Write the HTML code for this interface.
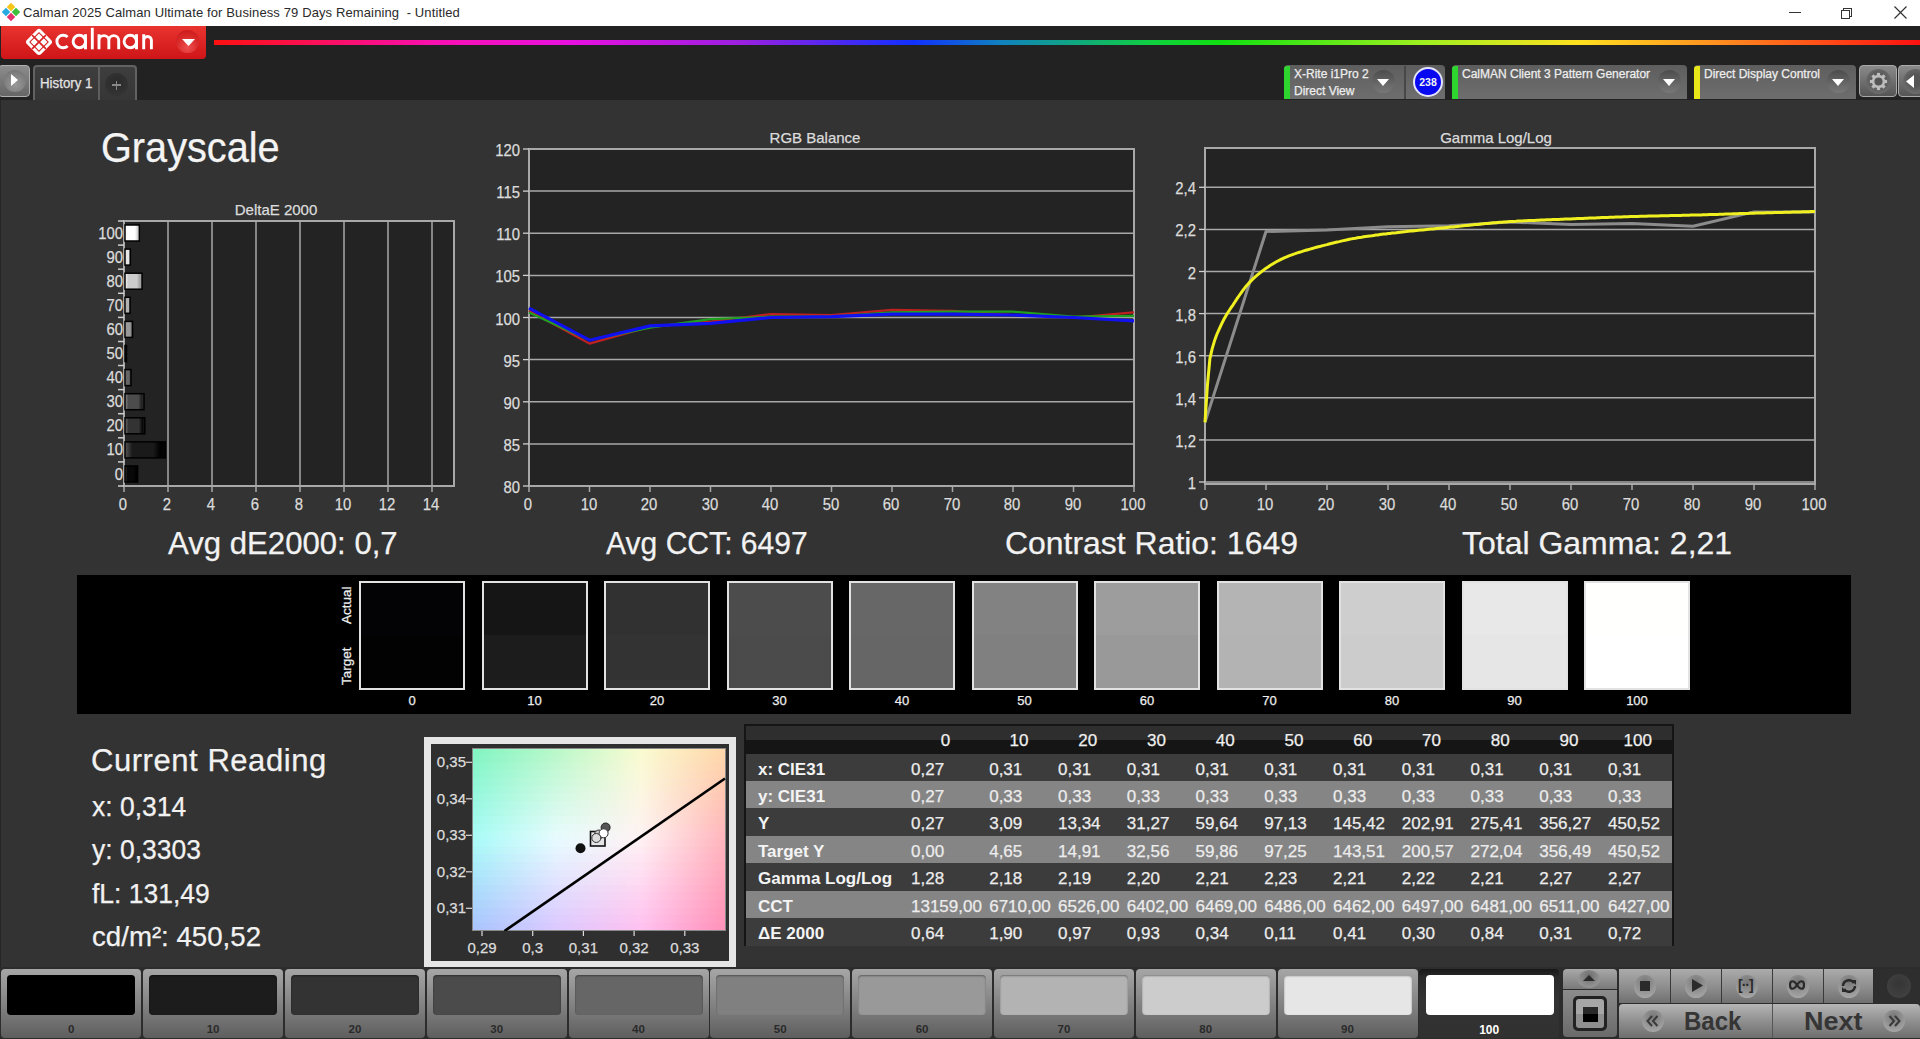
<!DOCTYPE html>
<html><head><meta charset="utf-8"><title>Calman</title>
<style>
*{margin:0;padding:0;box-sizing:border-box}
html,body{width:1920px;height:1039px;overflow:hidden;background:#333333;font-family:"Liberation Sans",sans-serif;color:#eee}
.a{position:absolute}
.t{position:absolute;white-space:nowrap;line-height:1;-webkit-text-stroke:0.25px currentColor}
</style></head><body>

<div class="a" style="left:0;top:0;width:1920px;height:26px;background:#fff"></div>
<div class="t" style="left:23px;top:6px;font-size:13px;color:#2a2a2a;letter-spacing:0.12px;-webkit-text-stroke:0">Calman 2025 Calman Ultimate for Business 79 Days Remaining&nbsp;&nbsp;- Untitled</div>
<svg class="a" style="left:1px;top:3px" width="20" height="20" viewBox="0 0 20 20">
<rect x="7" y="1" width="6" height="6" transform="rotate(45 10 4)" fill="#f5c518"/>
<rect x="2" y="6" width="6" height="6" transform="rotate(45 5 9)" fill="#27a9e1"/>
<rect x="12" y="6" width="6" height="6" transform="rotate(45 15 9)" fill="#3cc13c"/>
<rect x="7" y="11" width="6" height="6" transform="rotate(45 10 14)" fill="#e5336c"/>
</svg>
<div class="a" style="left:1789px;top:12px;width:12px;height:1px;background:#333"></div>
<div class="a" style="left:1843px;top:8px;width:9px;height:9px;border:1px solid #333"></div>
<div class="a" style="left:1841px;top:10px;width:9px;height:9px;border:1px solid #333;background:#fff"></div>
<svg class="a" style="left:1894px;top:6px" width="13" height="13"><path d="M0.5 0.5 L12.5 12.5 M12.5 0.5 L0.5 12.5" stroke="#333" stroke-width="1.2"/></svg>
<div class="a" style="left:0;top:26px;width:1920px;height:74px;background:#222222"></div>
<div class="a" style="left:1px;top:26px;width:205px;height:33px;border-radius:0 0 4px 4px;background:linear-gradient(#e8342f,#cf1518)"></div>
<svg class="a" style="left:0;top:26px" width="206" height="33" viewBox="0 26 206 33"><g fill="none" stroke="#fff" stroke-width="2.9">
<path d="M67.6 37.0 A6.3 6.3 0 1 0 67.6 46.0"/>
<circle cx="79.3" cy="41.5" r="6.2"/><path d="M85.5 34.2 L85.5 49.3"/>
<path d="M92.3 27.8 L92.3 49.3"/>
<path d="M99 49.3 L99 34.2 M99 40.3 A4.93 4.93 0 0 1 108.85 40.3 L108.85 49.3 M108.85 40.3 A4.93 4.93 0 0 1 118.7 40.3 L118.7 49.3"/>
<circle cx="130.3" cy="41.5" r="6.2"/><path d="M136.5 34.2 L136.5 49.3"/>
<path d="M143.7 49.3 L143.7 34.2 M143.7 40.3 A3.85 3.85 0 0 1 151.4 40.3 L151.4 49.3"/>
</g></svg>
<div class="a" style="left:176px;top:30px;width:23px;height:23px;border-radius:50%;background:radial-gradient(circle at 50% 75%,#ee5050,#d82828 55%,#c41414)"></div>
<svg class="a" style="left:181.5px;top:39px" width="13" height="8"><path d="M0 0 L13 0 L6.5 7 Z" fill="#fff"/></svg>
<svg class="a" style="left:24px;top:28px" width="30" height="28" viewBox="-15 -14 30 28">
<path d="M0 -13.2 Q1 -13.2 2 -12.2 L12.6 -1.6 Q13.6 0 12.6 1.6 L2 12.2 Q0 13.8 -2 12.2 L-12.6 1.6 Q-13.6 0 -12.6 -1.6 L-2 -12.2 Q-1 -13.2 0 -13.2 Z" fill="#fff"/>
<path d="M0 -9.9 L9.9 0 L0 9.9 L-9.9 0 Z" fill="#d82020"/>
<path d="M0 -8.4 L8.4 0 L0 8.4 L-8.4 0 Z" fill="#fff"/>
<path d="M-6.9 -6.9 L6.9 6.9 M6.9 -6.9 L-6.9 6.9" stroke="#d82020" stroke-width="1.6"/>
</svg>
<div class="a" style="left:214px;top:40px;width:1706px;height:5px;background:linear-gradient(90deg,#ff1010 0%,#f810b0 13%,#e810e0 21%,#9a20e0 31%,#1030ff 41%,#1080c0 46%,#10d040 55%,#10e010 59%,#a0f020 71%,#ffe020 80%,#ff9020 88%,#ff1010 100%)"></div>
<div class="a" style="left:-2px;top:65px;width:32px;height:32px;border-radius:4px;background:linear-gradient(#8c8c8c,#666);border:1.5px solid #b0b0b0"></div>
<div class="a" style="left:4px;top:70px;width:22px;height:22px;border-radius:50%;background:radial-gradient(circle at 50% 65%,#9a9a9a,#7a7a7a 70%,#6a6a6a)"></div>
<svg class="a" style="left:11px;top:74px" width="7" height="12"><path d="M0 0 L7 6 L0 12 Z" fill="#fff"/></svg>
<div class="a" style="left:33px;top:65px;width:104px;height:35px;border-radius:4px 4px 0 0;background:linear-gradient(#3e3e3e,#363636);border:2px solid #626262;border-bottom:none"></div>
<div class="a" style="left:98px;top:66px;width:2px;height:34px;background:#5e5e5e"></div>
<div class="t" style="left:40px;top:76px;font-size:14px;color:#e4e4e4;transform:scaleX(0.95);transform-origin:0 0">History 1</div>
<div class="a" style="left:105px;top:73px;width:23px;height:23px;border-radius:50%;background:radial-gradient(circle at 50% 40%,#2a2a2a,#333 70%,#3a3a3a)"></div>
<div class="a" style="left:112px;top:84px;width:9px;height:1.5px;background:#888"></div>
<div class="a" style="left:115.75px;top:80.5px;width:1.5px;height:9px;background:#888"></div>
<div class="a" style="left:0;top:100px;width:1px;height:868px;background:#262626"></div>
<div class="a" style="left:1284px;top:65px;width:161px;height:34px;border-radius:4px 4px 0 0;background:linear-gradient(#5e5e5e,#6e6e6e)"></div>
<div class="a" style="left:1284px;top:66px;width:6px;height:33px;border-radius:3px 0 0 0;background:#2fd52f"></div>
<div class="t" style="left:1294px;top:68px;font-size:12px;color:#eee">X-Rite i1Pro 2</div>
<div class="t" style="left:1294px;top:85px;font-size:12px;color:#eee">Direct View</div>
<div class="a" style="left:1404px;top:66px;width:2px;height:33px;background:#474747"></div>
<div class="a" style="left:1413px;top:67px;width:30px;height:30px;border-radius:50%;background:#0808f0;border:2px solid #e4e4ff"></div>
<div class="t" style="left:1413px;top:77px;width:30px;text-align:center;font-size:10.5px;font-weight:bold;-webkit-text-stroke:0;color:#f4f4f4">238</div>
<div class="a" style="left:1452px;top:65px;width:235px;height:34px;border-radius:4px 4px 0 0;background:linear-gradient(#5e5e5e,#6e6e6e)"></div>
<div class="a" style="left:1452px;top:66px;width:6px;height:33px;border-radius:3px 0 0 0;background:#2fd52f"></div>
<div class="t" style="left:1462px;top:68px;font-size:12px;color:#eee">CalMAN Client 3 Pattern Generator</div>
<div class="a" style="left:1694px;top:65px;width:162px;height:34px;border-radius:4px 4px 0 0;background:linear-gradient(#5e5e5e,#6e6e6e)"></div>
<div class="a" style="left:1694px;top:66px;width:6px;height:33px;border-radius:3px 0 0 0;background:#e8e818"></div>
<div class="t" style="left:1704px;top:68px;font-size:12px;color:#eee">Direct Display Control</div>
<div class="a" style="left:1372px;top:70px;width:23px;height:23px;border-radius:50%;background:linear-gradient(#4c4c4c,#6c6c6c 70%,#777)"></div>
<svg class="a" style="left:1377px;top:79px" width="12" height="7"><path d="M0 0 L12 0 L6 7 Z" fill="#fff"/></svg>
<div class="a" style="left:1658px;top:70px;width:23px;height:23px;border-radius:50%;background:linear-gradient(#4c4c4c,#6c6c6c 70%,#777)"></div>
<svg class="a" style="left:1663px;top:79px" width="12" height="7"><path d="M0 0 L12 0 L6 7 Z" fill="#fff"/></svg>
<div class="a" style="left:1827px;top:70px;width:23px;height:23px;border-radius:50%;background:linear-gradient(#4c4c4c,#6c6c6c 70%,#777)"></div>
<svg class="a" style="left:1832px;top:79px" width="12" height="7"><path d="M0 0 L12 0 L6 7 Z" fill="#fff"/></svg>
<div class="a" style="left:1859px;top:65px;width:38px;height:32px;border-radius:4px;background:linear-gradient(#8a8a8a,#555);border:1px solid #aaa"></div>
<div class="a" style="left:1866px;top:69px;width:25px;height:25px;border-radius:50%;background:radial-gradient(circle at 50% 45%,#555 30%,#6e6e6e 75%,#888)"></div>
<svg class="a" style="left:1866px;top:69px" width="25" height="25" viewBox="-12.5 -12.5 25 25"><circle r="5.4" fill="none" stroke="#bdbdbd" stroke-width="2.6"/><rect x="-1.6" y="-8.6" width="3.2" height="4" transform="rotate(0)" fill="#bdbdbd"/><rect x="-1.6" y="-8.6" width="3.2" height="4" transform="rotate(45)" fill="#bdbdbd"/><rect x="-1.6" y="-8.6" width="3.2" height="4" transform="rotate(90)" fill="#bdbdbd"/><rect x="-1.6" y="-8.6" width="3.2" height="4" transform="rotate(135)" fill="#bdbdbd"/><rect x="-1.6" y="-8.6" width="3.2" height="4" transform="rotate(180)" fill="#bdbdbd"/><rect x="-1.6" y="-8.6" width="3.2" height="4" transform="rotate(225)" fill="#bdbdbd"/><rect x="-1.6" y="-8.6" width="3.2" height="4" transform="rotate(270)" fill="#bdbdbd"/><rect x="-1.6" y="-8.6" width="3.2" height="4" transform="rotate(315)" fill="#bdbdbd"/></svg>
<div class="a" style="left:1898px;top:65px;width:30px;height:32px;border-radius:4px;background:linear-gradient(#8a8a8a,#555);border:1px solid #aaa"></div>
<div class="a" style="left:1903px;top:69px;width:25px;height:25px;border-radius:50%;background:radial-gradient(circle at 50% 45%,#555 30%,#6e6e6e 75%,#888)"></div>
<svg class="a" style="left:1906px;top:75px" width="8" height="13"><path d="M8 0 L0 6.5 L8 13 Z" fill="#fff"/></svg>
<div class="t" style="left:101px;top:127px;font-size:42px;color:#f4f4f4;transform:scaleX(0.945);transform-origin:0 0">Grayscale</div>
<div class="t" style="left:176px;top:202px;width:200px;text-align:center;font-size:15px;color:#dcdcdc">DeltaE 2000</div>
<svg class="a" style="left:0;top:0" width="1920" height="1039">
<rect x="124" y="221" width="330" height="265" fill="#232323"/>
<line x1="168.0" y1="221" x2="168.0" y2="486" stroke="#a8a8a8" stroke-width="1.5"/>
<line x1="212.0" y1="221" x2="212.0" y2="486" stroke="#a8a8a8" stroke-width="1.5"/>
<line x1="256.0" y1="221" x2="256.0" y2="486" stroke="#a8a8a8" stroke-width="1.5"/>
<line x1="300.0" y1="221" x2="300.0" y2="486" stroke="#a8a8a8" stroke-width="1.5"/>
<line x1="344.0" y1="221" x2="344.0" y2="486" stroke="#a8a8a8" stroke-width="1.5"/>
<line x1="388.0" y1="221" x2="388.0" y2="486" stroke="#a8a8a8" stroke-width="1.5"/>
<line x1="432.0" y1="221" x2="432.0" y2="486" stroke="#a8a8a8" stroke-width="1.5"/>
<rect x="124" y="221" width="330" height="265" fill="none" stroke="#a8a8a8" stroke-width="2"/>
<line x1="124.0" y1="486" x2="124.0" y2="492" stroke="#a8a8a8" stroke-width="1.5"/>
<line x1="168.0" y1="486" x2="168.0" y2="492" stroke="#a8a8a8" stroke-width="1.5"/>
<line x1="212.0" y1="486" x2="212.0" y2="492" stroke="#a8a8a8" stroke-width="1.5"/>
<line x1="256.0" y1="486" x2="256.0" y2="492" stroke="#a8a8a8" stroke-width="1.5"/>
<line x1="300.0" y1="486" x2="300.0" y2="492" stroke="#a8a8a8" stroke-width="1.5"/>
<line x1="344.0" y1="486" x2="344.0" y2="492" stroke="#a8a8a8" stroke-width="1.5"/>
<line x1="388.0" y1="486" x2="388.0" y2="492" stroke="#a8a8a8" stroke-width="1.5"/>
<line x1="432.0" y1="486" x2="432.0" y2="492" stroke="#a8a8a8" stroke-width="1.5"/>
<line x1="118" y1="221.0" x2="124" y2="221.0" stroke="#cfcfcf" stroke-width="1.5"/>
<line x1="118" y1="245.1" x2="124" y2="245.1" stroke="#cfcfcf" stroke-width="1.5"/>
<line x1="118" y1="269.2" x2="124" y2="269.2" stroke="#cfcfcf" stroke-width="1.5"/>
<line x1="118" y1="293.3" x2="124" y2="293.3" stroke="#cfcfcf" stroke-width="1.5"/>
<line x1="118" y1="317.4" x2="124" y2="317.4" stroke="#cfcfcf" stroke-width="1.5"/>
<line x1="118" y1="341.5" x2="124" y2="341.5" stroke="#cfcfcf" stroke-width="1.5"/>
<line x1="118" y1="365.5" x2="124" y2="365.5" stroke="#cfcfcf" stroke-width="1.5"/>
<line x1="118" y1="389.6" x2="124" y2="389.6" stroke="#cfcfcf" stroke-width="1.5"/>
<line x1="118" y1="413.7" x2="124" y2="413.7" stroke="#cfcfcf" stroke-width="1.5"/>
<line x1="118" y1="437.8" x2="124" y2="437.8" stroke="#cfcfcf" stroke-width="1.5"/>
<line x1="118" y1="461.9" x2="124" y2="461.9" stroke="#cfcfcf" stroke-width="1.5"/>
<line x1="118" y1="486.0" x2="124" y2="486.0" stroke="#cfcfcf" stroke-width="1.5"/>
<defs>
<linearGradient id="bg0" x1="0" x2="1" y1="0" y2="0"><stop offset="0" stop-color="rgb(68,68,68)"/><stop offset="0.18" stop-color="rgb(8,8,8)"/><stop offset="0.7" stop-color="rgb(8,8,8)"/><stop offset="0.88" stop-color="rgb(0,0,0)"/><stop offset="1" stop-color="rgb(0,0,0)"/></linearGradient>
<linearGradient id="bg1" x1="0" x2="1" y1="0" y2="0"><stop offset="0" stop-color="rgb(86,86,86)"/><stop offset="0.18" stop-color="rgb(26,26,26)"/><stop offset="0.7" stop-color="rgb(26,26,26)"/><stop offset="0.88" stop-color="rgb(0,0,0)"/><stop offset="1" stop-color="rgb(6,6,6)"/></linearGradient>
<linearGradient id="bg2" x1="0" x2="1" y1="0" y2="0"><stop offset="0" stop-color="rgb(111,111,111)"/><stop offset="0.18" stop-color="rgb(51,51,51)"/><stop offset="0.7" stop-color="rgb(51,51,51)"/><stop offset="0.88" stop-color="rgb(6,6,6)"/><stop offset="1" stop-color="rgb(31,31,31)"/></linearGradient>
<linearGradient id="bg3" x1="0" x2="1" y1="0" y2="0"><stop offset="0" stop-color="rgb(136,136,136)"/><stop offset="0.18" stop-color="rgb(76,76,76)"/><stop offset="0.7" stop-color="rgb(76,76,76)"/><stop offset="0.88" stop-color="rgb(31,31,31)"/><stop offset="1" stop-color="rgb(56,56,56)"/></linearGradient>
<linearGradient id="bg4" x1="0" x2="1" y1="0" y2="0"><stop offset="0" stop-color="rgb(162,162,162)"/><stop offset="0.18" stop-color="rgb(102,102,102)"/><stop offset="0.7" stop-color="rgb(102,102,102)"/><stop offset="0.88" stop-color="rgb(57,57,57)"/><stop offset="1" stop-color="rgb(82,82,82)"/></linearGradient>
<linearGradient id="bg5" x1="0" x2="1" y1="0" y2="0"><stop offset="0" stop-color="rgb(188,188,188)"/><stop offset="0.18" stop-color="rgb(128,128,128)"/><stop offset="0.7" stop-color="rgb(128,128,128)"/><stop offset="0.88" stop-color="rgb(83,83,83)"/><stop offset="1" stop-color="rgb(108,108,108)"/></linearGradient>
<linearGradient id="bg6" x1="0" x2="1" y1="0" y2="0"><stop offset="0" stop-color="rgb(213,213,213)"/><stop offset="0.18" stop-color="rgb(153,153,153)"/><stop offset="0.7" stop-color="rgb(153,153,153)"/><stop offset="0.88" stop-color="rgb(108,108,108)"/><stop offset="1" stop-color="rgb(133,133,133)"/></linearGradient>
<linearGradient id="bg7" x1="0" x2="1" y1="0" y2="0"><stop offset="0" stop-color="rgb(238,238,238)"/><stop offset="0.18" stop-color="rgb(178,178,178)"/><stop offset="0.7" stop-color="rgb(178,178,178)"/><stop offset="0.88" stop-color="rgb(133,133,133)"/><stop offset="1" stop-color="rgb(158,158,158)"/></linearGradient>
<linearGradient id="bg8" x1="0" x2="1" y1="0" y2="0"><stop offset="0" stop-color="rgb(255,255,255)"/><stop offset="0.18" stop-color="rgb(204,204,204)"/><stop offset="0.7" stop-color="rgb(204,204,204)"/><stop offset="0.88" stop-color="rgb(159,159,159)"/><stop offset="1" stop-color="rgb(184,184,184)"/></linearGradient>
<linearGradient id="bg9" x1="0" x2="1" y1="0" y2="0"><stop offset="0" stop-color="rgb(255,255,255)"/><stop offset="0.18" stop-color="rgb(230,230,230)"/><stop offset="0.7" stop-color="rgb(230,230,230)"/><stop offset="0.88" stop-color="rgb(185,185,185)"/><stop offset="1" stop-color="rgb(210,210,210)"/></linearGradient>
<linearGradient id="bg10" x1="0" x2="1" y1="0" y2="0"><stop offset="0" stop-color="rgb(255,255,255)"/><stop offset="0.18" stop-color="rgb(255,255,255)"/><stop offset="0.7" stop-color="rgb(255,255,255)"/><stop offset="0.88" stop-color="rgb(210,210,210)"/><stop offset="1" stop-color="rgb(235,235,235)"/></linearGradient>
</defs>
<rect x="125" y="466.0" width="12.6" height="16" fill="url(#bg0)" stroke="#000" stroke-width="1.5"/>
<rect x="125" y="441.9" width="40.3" height="16" fill="url(#bg1)" stroke="#000" stroke-width="1.5"/>
<rect x="125" y="417.8" width="19.8" height="16" fill="url(#bg2)" stroke="#000" stroke-width="1.5"/>
<rect x="125" y="393.7" width="19.0" height="16" fill="url(#bg3)" stroke="#000" stroke-width="1.5"/>
<rect x="125" y="369.6" width="6.0" height="16" fill="url(#bg4)" stroke="#000" stroke-width="1.5"/>
<rect x="125" y="345.5" width="1.5" height="16" fill="url(#bg5)" stroke="#000" stroke-width="1.5"/>
<rect x="125" y="321.4" width="7.5" height="16" fill="url(#bg6)" stroke="#000" stroke-width="1.5"/>
<rect x="125" y="297.3" width="5.1" height="16" fill="url(#bg7)" stroke="#000" stroke-width="1.5"/>
<rect x="125" y="273.2" width="17.0" height="16" fill="url(#bg8)" stroke="#000" stroke-width="1.5"/>
<rect x="125" y="249.1" width="5.3" height="16" fill="url(#bg9)" stroke="#000" stroke-width="1.5"/>
<rect x="125" y="225.0" width="14.3" height="16" fill="url(#bg10)" stroke="#000" stroke-width="1.5"/>
</svg>
<div class="t" style="left:65px;top:465.5px;width:58px;text-align:right;font-size:16.5px;transform:scaleX(0.9);transform-origin:100% 50%;color:#dcdcdc">0</div>
<div class="t" style="left:65px;top:441.4px;width:58px;text-align:right;font-size:16.5px;transform:scaleX(0.9);transform-origin:100% 50%;color:#dcdcdc">10</div>
<div class="t" style="left:65px;top:417.3px;width:58px;text-align:right;font-size:16.5px;transform:scaleX(0.9);transform-origin:100% 50%;color:#dcdcdc">20</div>
<div class="t" style="left:65px;top:393.2px;width:58px;text-align:right;font-size:16.5px;transform:scaleX(0.9);transform-origin:100% 50%;color:#dcdcdc">30</div>
<div class="t" style="left:65px;top:369.1px;width:58px;text-align:right;font-size:16.5px;transform:scaleX(0.9);transform-origin:100% 50%;color:#dcdcdc">40</div>
<div class="t" style="left:65px;top:345.0px;width:58px;text-align:right;font-size:16.5px;transform:scaleX(0.9);transform-origin:100% 50%;color:#dcdcdc">50</div>
<div class="t" style="left:65px;top:320.9px;width:58px;text-align:right;font-size:16.5px;transform:scaleX(0.9);transform-origin:100% 50%;color:#dcdcdc">60</div>
<div class="t" style="left:65px;top:296.8px;width:58px;text-align:right;font-size:16.5px;transform:scaleX(0.9);transform-origin:100% 50%;color:#dcdcdc">70</div>
<div class="t" style="left:65px;top:272.7px;width:58px;text-align:right;font-size:16.5px;transform:scaleX(0.9);transform-origin:100% 50%;color:#dcdcdc">80</div>
<div class="t" style="left:65px;top:248.6px;width:58px;text-align:right;font-size:16.5px;transform:scaleX(0.9);transform-origin:100% 50%;color:#dcdcdc">90</div>
<div class="t" style="left:65px;top:224.5px;width:58px;text-align:right;font-size:16.5px;transform:scaleX(0.9);transform-origin:100% 50%;color:#dcdcdc">100</div>
<div class="t" style="left:103.0px;top:496px;width:40px;text-align:center;font-size:16.5px;transform:scaleX(0.9);color:#dcdcdc">0</div>
<div class="t" style="left:147.0px;top:496px;width:40px;text-align:center;font-size:16.5px;transform:scaleX(0.9);color:#dcdcdc">2</div>
<div class="t" style="left:191.0px;top:496px;width:40px;text-align:center;font-size:16.5px;transform:scaleX(0.9);color:#dcdcdc">4</div>
<div class="t" style="left:235.0px;top:496px;width:40px;text-align:center;font-size:16.5px;transform:scaleX(0.9);color:#dcdcdc">6</div>
<div class="t" style="left:279.0px;top:496px;width:40px;text-align:center;font-size:16.5px;transform:scaleX(0.9);color:#dcdcdc">8</div>
<div class="t" style="left:323.0px;top:496px;width:40px;text-align:center;font-size:16.5px;transform:scaleX(0.9);color:#dcdcdc">10</div>
<div class="t" style="left:367.0px;top:496px;width:40px;text-align:center;font-size:16.5px;transform:scaleX(0.9);color:#dcdcdc">12</div>
<div class="t" style="left:411.0px;top:496px;width:40px;text-align:center;font-size:16.5px;transform:scaleX(0.9);color:#dcdcdc">14</div>
<div class="t" style="left:715px;top:130px;width:200px;text-align:center;font-size:15px;color:#dcdcdc">RGB Balance</div>
<svg class="a" style="left:0;top:0" width="1920" height="1039">
<rect x="529" y="149" width="605" height="337" fill="#232323"/>
<line x1="529" y1="191.1" x2="1134" y2="191.1" stroke="#a8a8a8" stroke-width="1.5"/>
<line x1="529" y1="233.2" x2="1134" y2="233.2" stroke="#a8a8a8" stroke-width="1.5"/>
<line x1="529" y1="275.4" x2="1134" y2="275.4" stroke="#a8a8a8" stroke-width="1.5"/>
<line x1="529" y1="317.5" x2="1134" y2="317.5" stroke="#a8a8a8" stroke-width="1.5"/>
<line x1="529" y1="359.6" x2="1134" y2="359.6" stroke="#a8a8a8" stroke-width="1.5"/>
<line x1="529" y1="401.8" x2="1134" y2="401.8" stroke="#a8a8a8" stroke-width="1.5"/>
<line x1="529" y1="443.9" x2="1134" y2="443.9" stroke="#a8a8a8" stroke-width="1.5"/>
<rect x="529" y="149" width="605" height="337" fill="none" stroke="#a8a8a8" stroke-width="2"/>
<line x1="523" y1="149.0" x2="529" y2="149.0" stroke="#d0d0d0" stroke-width="1.3"/>
<line x1="523" y1="191.1" x2="529" y2="191.1" stroke="#d0d0d0" stroke-width="1.3"/>
<line x1="523" y1="233.2" x2="529" y2="233.2" stroke="#d0d0d0" stroke-width="1.3"/>
<line x1="523" y1="275.4" x2="529" y2="275.4" stroke="#d0d0d0" stroke-width="1.3"/>
<line x1="523" y1="317.5" x2="529" y2="317.5" stroke="#d0d0d0" stroke-width="1.3"/>
<line x1="523" y1="359.6" x2="529" y2="359.6" stroke="#d0d0d0" stroke-width="1.3"/>
<line x1="523" y1="401.8" x2="529" y2="401.8" stroke="#d0d0d0" stroke-width="1.3"/>
<line x1="523" y1="443.9" x2="529" y2="443.9" stroke="#d0d0d0" stroke-width="1.3"/>
<line x1="523" y1="486.0" x2="529" y2="486.0" stroke="#d0d0d0" stroke-width="1.3"/>
<line x1="529.0" y1="486" x2="529.0" y2="492" stroke="#a8a8a8" stroke-width="1.5"/>
<line x1="589.5" y1="486" x2="589.5" y2="492" stroke="#a8a8a8" stroke-width="1.5"/>
<line x1="650.0" y1="486" x2="650.0" y2="492" stroke="#a8a8a8" stroke-width="1.5"/>
<line x1="710.5" y1="486" x2="710.5" y2="492" stroke="#a8a8a8" stroke-width="1.5"/>
<line x1="771.0" y1="486" x2="771.0" y2="492" stroke="#a8a8a8" stroke-width="1.5"/>
<line x1="831.5" y1="486" x2="831.5" y2="492" stroke="#a8a8a8" stroke-width="1.5"/>
<line x1="892.0" y1="486" x2="892.0" y2="492" stroke="#a8a8a8" stroke-width="1.5"/>
<line x1="952.5" y1="486" x2="952.5" y2="492" stroke="#a8a8a8" stroke-width="1.5"/>
<line x1="1013.0" y1="486" x2="1013.0" y2="492" stroke="#a8a8a8" stroke-width="1.5"/>
<line x1="1073.5" y1="486" x2="1073.5" y2="492" stroke="#a8a8a8" stroke-width="1.5"/>
<line x1="1134.0" y1="486" x2="1134.0" y2="492" stroke="#a8a8a8" stroke-width="1.5"/>
<polyline points="529.0,310.8 589.5,343.6 650.0,326.8 710.5,321.7 771.0,314.1 831.5,315.0 892.0,309.9 952.5,310.8 1013.0,315.0 1073.5,317.5 1134.0,312.4" fill="none" stroke="#c02020" stroke-width="2.2" stroke-linejoin="round"/>
<polyline points="529.0,312.4 589.5,340.2 650.0,327.6 710.5,319.2 771.0,316.7 831.5,316.7 892.0,312.4 952.5,311.6 1013.0,311.6 1073.5,316.7 1134.0,315.8" fill="none" stroke="#20a020" stroke-width="2.2" stroke-linejoin="round"/>
<polyline points="529.0,308.2 589.5,340.2 650.0,325.9 710.5,323.4 771.0,317.5 831.5,316.7 892.0,314.1 952.5,314.1 1013.0,315.0 1073.5,317.5 1134.0,320.9" fill="none" stroke="#1010f0" stroke-width="3.2" stroke-linejoin="round"/>
</svg>
<div class="t" style="left:469px;top:142.0px;width:51px;text-align:right;font-size:16.5px;transform:scaleX(0.9);transform-origin:100% 50%;color:#dcdcdc">120</div>
<div class="t" style="left:469px;top:184.1px;width:51px;text-align:right;font-size:16.5px;transform:scaleX(0.9);transform-origin:100% 50%;color:#dcdcdc">115</div>
<div class="t" style="left:469px;top:226.2px;width:51px;text-align:right;font-size:16.5px;transform:scaleX(0.9);transform-origin:100% 50%;color:#dcdcdc">110</div>
<div class="t" style="left:469px;top:268.4px;width:51px;text-align:right;font-size:16.5px;transform:scaleX(0.9);transform-origin:100% 50%;color:#dcdcdc">105</div>
<div class="t" style="left:469px;top:310.5px;width:51px;text-align:right;font-size:16.5px;transform:scaleX(0.9);transform-origin:100% 50%;color:#dcdcdc">100</div>
<div class="t" style="left:469px;top:352.6px;width:51px;text-align:right;font-size:16.5px;transform:scaleX(0.9);transform-origin:100% 50%;color:#dcdcdc">95</div>
<div class="t" style="left:469px;top:394.8px;width:51px;text-align:right;font-size:16.5px;transform:scaleX(0.9);transform-origin:100% 50%;color:#dcdcdc">90</div>
<div class="t" style="left:469px;top:436.9px;width:51px;text-align:right;font-size:16.5px;transform:scaleX(0.9);transform-origin:100% 50%;color:#dcdcdc">85</div>
<div class="t" style="left:469px;top:479.0px;width:51px;text-align:right;font-size:16.5px;transform:scaleX(0.9);transform-origin:100% 50%;color:#dcdcdc">80</div>
<div class="t" style="left:508.0px;top:496px;width:40px;text-align:center;font-size:16.5px;transform:scaleX(0.9);color:#dcdcdc">0</div>
<div class="t" style="left:568.5px;top:496px;width:40px;text-align:center;font-size:16.5px;transform:scaleX(0.9);color:#dcdcdc">10</div>
<div class="t" style="left:629.0px;top:496px;width:40px;text-align:center;font-size:16.5px;transform:scaleX(0.9);color:#dcdcdc">20</div>
<div class="t" style="left:689.5px;top:496px;width:40px;text-align:center;font-size:16.5px;transform:scaleX(0.9);color:#dcdcdc">30</div>
<div class="t" style="left:750.0px;top:496px;width:40px;text-align:center;font-size:16.5px;transform:scaleX(0.9);color:#dcdcdc">40</div>
<div class="t" style="left:810.5px;top:496px;width:40px;text-align:center;font-size:16.5px;transform:scaleX(0.9);color:#dcdcdc">50</div>
<div class="t" style="left:871.0px;top:496px;width:40px;text-align:center;font-size:16.5px;transform:scaleX(0.9);color:#dcdcdc">60</div>
<div class="t" style="left:931.5px;top:496px;width:40px;text-align:center;font-size:16.5px;transform:scaleX(0.9);color:#dcdcdc">70</div>
<div class="t" style="left:992.0px;top:496px;width:40px;text-align:center;font-size:16.5px;transform:scaleX(0.9);color:#dcdcdc">80</div>
<div class="t" style="left:1052.5px;top:496px;width:40px;text-align:center;font-size:16.5px;transform:scaleX(0.9);color:#dcdcdc">90</div>
<div class="t" style="left:1113.0px;top:496px;width:40px;text-align:center;font-size:16.5px;transform:scaleX(0.9);color:#dcdcdc">100</div>
<div class="t" style="left:1396px;top:130px;width:200px;text-align:center;font-size:15px;color:#dcdcdc">Gamma Log/Log</div>
<svg class="a" style="left:0;top:0" width="1920" height="1039">
<rect x="1205" y="148" width="610" height="336" fill="#232323"/>
<line x1="1205" y1="439.9" x2="1815" y2="439.9" stroke="#a8a8a8" stroke-width="1.5"/>
<line x1="1205" y1="397.8" x2="1815" y2="397.8" stroke="#a8a8a8" stroke-width="1.5"/>
<line x1="1205" y1="355.7" x2="1815" y2="355.7" stroke="#a8a8a8" stroke-width="1.5"/>
<line x1="1205" y1="313.6" x2="1815" y2="313.6" stroke="#a8a8a8" stroke-width="1.5"/>
<line x1="1205" y1="271.5" x2="1815" y2="271.5" stroke="#a8a8a8" stroke-width="1.5"/>
<line x1="1205" y1="229.4" x2="1815" y2="229.4" stroke="#a8a8a8" stroke-width="1.5"/>
<line x1="1205" y1="187.3" x2="1815" y2="187.3" stroke="#a8a8a8" stroke-width="1.5"/>
<line x1="1205" y1="482.0" x2="1815" y2="482.0" stroke="#a8a8a8" stroke-width="1.5"/>
<rect x="1205" y="148" width="610" height="336" fill="none" stroke="#a8a8a8" stroke-width="2"/>
<line x1="1199" y1="482.0" x2="1205" y2="482.0" stroke="#d0d0d0" stroke-width="1.3"/>
<line x1="1199" y1="439.9" x2="1205" y2="439.9" stroke="#d0d0d0" stroke-width="1.3"/>
<line x1="1199" y1="397.8" x2="1205" y2="397.8" stroke="#d0d0d0" stroke-width="1.3"/>
<line x1="1199" y1="355.7" x2="1205" y2="355.7" stroke="#d0d0d0" stroke-width="1.3"/>
<line x1="1199" y1="313.6" x2="1205" y2="313.6" stroke="#d0d0d0" stroke-width="1.3"/>
<line x1="1199" y1="271.5" x2="1205" y2="271.5" stroke="#d0d0d0" stroke-width="1.3"/>
<line x1="1199" y1="229.4" x2="1205" y2="229.4" stroke="#d0d0d0" stroke-width="1.3"/>
<line x1="1199" y1="187.3" x2="1205" y2="187.3" stroke="#d0d0d0" stroke-width="1.3"/>
<line x1="1205.0" y1="484" x2="1205.0" y2="490" stroke="#a8a8a8" stroke-width="1.5"/>
<line x1="1266.0" y1="484" x2="1266.0" y2="490" stroke="#a8a8a8" stroke-width="1.5"/>
<line x1="1327.0" y1="484" x2="1327.0" y2="490" stroke="#a8a8a8" stroke-width="1.5"/>
<line x1="1388.0" y1="484" x2="1388.0" y2="490" stroke="#a8a8a8" stroke-width="1.5"/>
<line x1="1449.0" y1="484" x2="1449.0" y2="490" stroke="#a8a8a8" stroke-width="1.5"/>
<line x1="1510.0" y1="484" x2="1510.0" y2="490" stroke="#a8a8a8" stroke-width="1.5"/>
<line x1="1571.0" y1="484" x2="1571.0" y2="490" stroke="#a8a8a8" stroke-width="1.5"/>
<line x1="1632.0" y1="484" x2="1632.0" y2="490" stroke="#a8a8a8" stroke-width="1.5"/>
<line x1="1693.0" y1="484" x2="1693.0" y2="490" stroke="#a8a8a8" stroke-width="1.5"/>
<line x1="1754.0" y1="484" x2="1754.0" y2="490" stroke="#a8a8a8" stroke-width="1.5"/>
<line x1="1815.0" y1="484" x2="1815.0" y2="490" stroke="#a8a8a8" stroke-width="1.5"/>
<polyline points="1205.0,422.4 1266.0,231.5 1327.0,230.0 1388.0,226.7 1449.0,225.8 1510.0,222.0 1571.0,224.6 1632.0,223.5 1693.0,226.2 1754.0,211.9 1815.0,211.9" fill="none" stroke="#8c8c8c" stroke-width="3" stroke-linejoin="round"/>
<path d="M1205.0,422.4 L1207.4,385.5 L1209.9,358.6 L1212.2,348.7 L1214.5,340.8 L1216.8,334.5 L1219.2,329.1 L1221.5,324.1 L1223.8,319.5 L1226.1,315.4 L1228.4,311.7 L1230.7,308.2 L1233.1,304.8 L1235.2,301.5 L1237.4,298.2 L1239.6,295.0 L1241.8,291.8 L1244.0,288.9 L1246.1,286.2 L1248.3,283.7 L1250.5,281.4 L1252.7,279.2 L1254.9,277.1 L1257.2,275.2 L1259.4,273.3 L1261.6,271.6 L1263.8,269.9 L1266.0,268.3 L1268.1,266.9 L1270.1,265.6 L1272.2,264.3 L1274.3,263.0 L1276.4,261.8 L1278.4,260.7 L1280.5,259.6 L1282.6,258.6 L1284.7,257.6 L1286.7,256.8 L1288.9,255.9 L1291.0,255.2 L1293.1,254.4 L1295.2,253.7 L1297.3,252.9 L1299.5,252.2 L1301.6,251.6 L1303.7,250.9 L1305.8,250.3 L1307.9,249.7 L1310.0,249.1 L1312.2,248.5 L1314.3,247.9 L1316.4,247.3 L1318.5,246.7 L1320.6,246.2 L1322.8,245.6 L1324.9,245.1 L1327.0,244.6 L1329.0,244.0 L1331.1,243.5 L1333.1,243.0 L1335.1,242.5 L1337.2,242.0 L1339.2,241.6 L1341.2,241.1 L1343.3,240.6 L1345.3,240.2 L1347.3,239.8 L1349.4,239.3 L1351.4,238.9 L1353.4,238.5 L1355.5,238.2 L1357.5,237.8 L1359.5,237.5 L1361.6,237.2 L1363.6,236.8 L1365.6,236.5 L1367.7,236.2 L1369.7,235.9 L1371.7,235.7 L1373.8,235.4 L1375.8,235.1 L1377.8,234.9 L1379.9,234.6 L1381.9,234.3 L1383.9,234.1 L1386.0,233.9 L1388.0,233.6 L1390.0,233.4 L1392.1,233.1 L1394.1,232.9 L1396.1,232.7 L1398.2,232.4 L1400.2,232.2 L1402.2,232.0 L1404.3,231.8 L1406.3,231.6 L1408.3,231.3 L1410.4,231.1 L1412.4,230.9 L1414.4,230.7 L1416.5,230.5 L1418.5,230.3 L1420.5,230.1 L1422.6,229.9 L1424.6,229.7 L1426.6,229.5 L1428.7,229.3 L1430.7,229.1 L1432.7,228.9 L1434.8,228.7 L1436.8,228.5 L1438.8,228.3 L1440.9,228.1 L1442.9,227.9 L1444.9,227.7 L1447.0,227.5 L1449.0,227.3 L1451.0,227.1 L1453.1,226.9 L1455.1,226.7 L1457.1,226.5 L1459.2,226.3 L1461.2,226.1 L1463.2,225.8 L1465.3,225.6 L1467.3,225.4 L1469.3,225.2 L1471.4,225.0 L1473.4,224.8 L1475.4,224.6 L1477.5,224.4 L1479.5,224.2 L1481.5,224.0 L1483.6,223.8 L1485.6,223.6 L1487.6,223.4 L1489.7,223.2 L1491.7,223.0 L1493.7,222.8 L1495.8,222.7 L1497.8,222.5 L1499.8,222.3 L1501.9,222.2 L1503.9,222.0 L1505.9,221.9 L1508.0,221.7 L1510.0,221.6 L1512.0,221.5 L1514.1,221.4 L1516.1,221.3 L1518.1,221.1 L1520.2,221.0 L1522.2,220.9 L1524.2,220.8 L1526.3,220.7 L1528.3,220.6 L1530.3,220.5 L1532.4,220.4 L1534.4,220.4 L1536.4,220.3 L1538.5,220.2 L1540.5,220.1 L1542.5,220.0 L1544.6,219.9 L1546.6,219.8 L1548.6,219.8 L1550.7,219.7 L1552.7,219.6 L1554.7,219.5 L1556.8,219.4 L1558.8,219.4 L1560.8,219.3 L1562.9,219.2 L1564.9,219.1 L1566.9,219.0 L1569.0,219.0 L1571.0,218.9 L1573.0,218.8 L1575.1,218.7 L1577.1,218.6 L1579.1,218.5 L1581.2,218.5 L1583.2,218.4 L1585.2,218.3 L1587.3,218.2 L1589.3,218.1 L1591.3,218.0 L1593.4,218.0 L1595.4,217.9 L1597.4,217.8 L1599.5,217.7 L1601.5,217.6 L1603.5,217.5 L1605.6,217.5 L1607.6,217.4 L1609.6,217.3 L1611.7,217.2 L1613.7,217.2 L1615.7,217.1 L1617.8,217.0 L1619.8,217.0 L1621.8,216.9 L1623.9,216.8 L1625.9,216.7 L1627.9,216.7 L1630.0,216.6 L1632.0,216.6 L1634.0,216.5 L1636.1,216.4 L1638.1,216.4 L1640.1,216.3 L1642.2,216.3 L1644.2,216.2 L1646.2,216.2 L1648.3,216.1 L1650.3,216.1 L1652.3,216.0 L1654.4,216.0 L1656.4,215.9 L1658.4,215.9 L1660.5,215.8 L1662.5,215.8 L1664.5,215.8 L1666.6,215.7 L1668.6,215.7 L1670.6,215.6 L1672.7,215.6 L1674.7,215.5 L1676.7,215.5 L1678.8,215.4 L1680.8,215.4 L1682.8,215.3 L1684.9,215.3 L1686.9,215.2 L1688.9,215.2 L1691.0,215.1 L1693.0,215.1 L1695.0,215.0 L1697.1,215.0 L1699.1,214.9 L1701.1,214.9 L1703.2,214.8 L1705.2,214.7 L1707.2,214.7 L1709.3,214.6 L1711.3,214.5 L1713.3,214.5 L1715.4,214.4 L1717.4,214.4 L1719.4,214.3 L1721.5,214.2 L1723.5,214.2 L1725.5,214.1 L1727.6,214.0 L1729.6,214.0 L1731.6,213.9 L1733.7,213.8 L1735.7,213.8 L1737.7,213.7 L1739.8,213.6 L1741.8,213.6 L1743.8,213.5 L1745.9,213.4 L1747.9,213.4 L1749.9,213.3 L1752.0,213.3 L1754.0,213.2 L1756.0,213.1 L1758.1,213.1 L1760.1,213.0 L1762.1,213.0 L1764.2,212.9 L1766.2,212.8 L1768.2,212.8 L1770.3,212.7 L1772.3,212.7 L1774.3,212.6 L1776.4,212.6 L1778.4,212.5 L1780.4,212.4 L1782.5,212.4 L1784.5,212.3 L1786.5,212.3 L1788.6,212.2 L1790.6,212.2 L1792.6,212.1 L1794.7,212.1 L1796.7,212.0 L1798.7,212.0 L1800.8,211.9 L1802.8,211.8 L1804.8,211.8 L1806.9,211.7 L1808.9,211.7 L1810.9,211.6 L1813.0,211.6 L1815.0,211.5" fill="none" stroke="#f0f020" stroke-width="3" stroke-linejoin="round"/>
</svg>
<div class="t" style="left:1145px;top:475.0px;width:51px;text-align:right;font-size:16.5px;transform:scaleX(0.9);transform-origin:100% 50%;color:#dcdcdc">1</div>
<div class="t" style="left:1145px;top:432.9px;width:51px;text-align:right;font-size:16.5px;transform:scaleX(0.9);transform-origin:100% 50%;color:#dcdcdc">1,2</div>
<div class="t" style="left:1145px;top:390.8px;width:51px;text-align:right;font-size:16.5px;transform:scaleX(0.9);transform-origin:100% 50%;color:#dcdcdc">1,4</div>
<div class="t" style="left:1145px;top:348.7px;width:51px;text-align:right;font-size:16.5px;transform:scaleX(0.9);transform-origin:100% 50%;color:#dcdcdc">1,6</div>
<div class="t" style="left:1145px;top:306.6px;width:51px;text-align:right;font-size:16.5px;transform:scaleX(0.9);transform-origin:100% 50%;color:#dcdcdc">1,8</div>
<div class="t" style="left:1145px;top:264.5px;width:51px;text-align:right;font-size:16.5px;transform:scaleX(0.9);transform-origin:100% 50%;color:#dcdcdc">2</div>
<div class="t" style="left:1145px;top:222.4px;width:51px;text-align:right;font-size:16.5px;transform:scaleX(0.9);transform-origin:100% 50%;color:#dcdcdc">2,2</div>
<div class="t" style="left:1145px;top:180.3px;width:51px;text-align:right;font-size:16.5px;transform:scaleX(0.9);transform-origin:100% 50%;color:#dcdcdc">2,4</div>
<div class="t" style="left:1184.0px;top:496px;width:40px;text-align:center;font-size:16.5px;transform:scaleX(0.9);color:#dcdcdc">0</div>
<div class="t" style="left:1245.0px;top:496px;width:40px;text-align:center;font-size:16.5px;transform:scaleX(0.9);color:#dcdcdc">10</div>
<div class="t" style="left:1306.0px;top:496px;width:40px;text-align:center;font-size:16.5px;transform:scaleX(0.9);color:#dcdcdc">20</div>
<div class="t" style="left:1367.0px;top:496px;width:40px;text-align:center;font-size:16.5px;transform:scaleX(0.9);color:#dcdcdc">30</div>
<div class="t" style="left:1428.0px;top:496px;width:40px;text-align:center;font-size:16.5px;transform:scaleX(0.9);color:#dcdcdc">40</div>
<div class="t" style="left:1489.0px;top:496px;width:40px;text-align:center;font-size:16.5px;transform:scaleX(0.9);color:#dcdcdc">50</div>
<div class="t" style="left:1550.0px;top:496px;width:40px;text-align:center;font-size:16.5px;transform:scaleX(0.9);color:#dcdcdc">60</div>
<div class="t" style="left:1611.0px;top:496px;width:40px;text-align:center;font-size:16.5px;transform:scaleX(0.9);color:#dcdcdc">70</div>
<div class="t" style="left:1672.0px;top:496px;width:40px;text-align:center;font-size:16.5px;transform:scaleX(0.9);color:#dcdcdc">80</div>
<div class="t" style="left:1733.0px;top:496px;width:40px;text-align:center;font-size:16.5px;transform:scaleX(0.9);color:#dcdcdc">90</div>
<div class="t" style="left:1794.0px;top:496px;width:40px;text-align:center;font-size:16.5px;transform:scaleX(0.9);color:#dcdcdc">100</div>
<div class="t" style="left:168px;top:527px;font-size:32px;color:#f2f2f2;transform:scaleX(0.973);transform-origin:0 0">Avg dE2000: 0,7</div>
<div class="t" style="left:606px;top:527px;font-size:32px;color:#f2f2f2;transform:scaleX(0.94);transform-origin:0 0">Avg CCT: 6497</div>
<div class="t" style="left:1005px;top:527px;font-size:32px;color:#f2f2f2;transform:scaleX(0.998);transform-origin:0 0">Contrast Ratio: 1649</div>
<div class="t" style="left:1462px;top:527px;font-size:32px;color:#f2f2f2;transform:scaleX(0.999);transform-origin:0 0">Total Gamma: 2,21</div>
<div class="a" style="left:77px;top:575px;width:1774px;height:139px;background:#000"></div>
<div class="t" style="left:340px;top:624px;font-size:13.5px;color:#eee;transform:rotate(-90deg);transform-origin:0 0">Actual</div>
<div class="t" style="left:340px;top:684.5px;font-size:13.5px;color:#eee;transform:rotate(-90deg);transform-origin:0 0">Target</div>
<div class="a" style="left:359.0px;top:581px;width:106px;height:109px;border:2px solid #e2e2e2;background:linear-gradient(#030305 50%,#020202 50%)"></div>
<div class="t" style="left:362.0px;top:694px;width:100px;text-align:center;font-size:13px;color:#eee">0</div>
<div class="a" style="left:481.5px;top:581px;width:106px;height:109px;border:2px solid #e2e2e2;background:linear-gradient(#151515 50%,#1c1c1c 50%)"></div>
<div class="t" style="left:484.5px;top:694px;width:100px;text-align:center;font-size:13px;color:#eee">10</div>
<div class="a" style="left:604.0px;top:581px;width:106px;height:109px;border:2px solid #e2e2e2;background:linear-gradient(#313131 50%,#333333 50%)"></div>
<div class="t" style="left:607.0px;top:694px;width:100px;text-align:center;font-size:13px;color:#eee">20</div>
<div class="a" style="left:726.5px;top:581px;width:106px;height:109px;border:2px solid #e2e2e2;background:linear-gradient(#4c4c4c 50%,#4b4b4b 50%)"></div>
<div class="t" style="left:729.5px;top:694px;width:100px;text-align:center;font-size:13px;color:#eee">30</div>
<div class="a" style="left:849.0px;top:581px;width:106px;height:109px;border:2px solid #e2e2e2;background:linear-gradient(#676767 50%,#666666 50%)"></div>
<div class="t" style="left:852.0px;top:694px;width:100px;text-align:center;font-size:13px;color:#eee">40</div>
<div class="a" style="left:971.5px;top:581px;width:106px;height:109px;border:2px solid #e2e2e2;background:linear-gradient(#828282 50%,#808080 50%)"></div>
<div class="t" style="left:974.5px;top:694px;width:100px;text-align:center;font-size:13px;color:#eee">50</div>
<div class="a" style="left:1094.0px;top:581px;width:106px;height:109px;border:2px solid #e2e2e2;background:linear-gradient(#9d9d9d 50%,#999999 50%)"></div>
<div class="t" style="left:1097.0px;top:694px;width:100px;text-align:center;font-size:13px;color:#eee">60</div>
<div class="a" style="left:1216.5px;top:581px;width:106px;height:109px;border:2px solid #e2e2e2;background:linear-gradient(#b4b4b4 50%,#b3b3b3 50%)"></div>
<div class="t" style="left:1219.5px;top:694px;width:100px;text-align:center;font-size:13px;color:#eee">70</div>
<div class="a" style="left:1339.0px;top:581px;width:106px;height:109px;border:2px solid #e2e2e2;background:linear-gradient(#cecece 50%,#cccccc 50%)"></div>
<div class="t" style="left:1342.0px;top:694px;width:100px;text-align:center;font-size:13px;color:#eee">80</div>
<div class="a" style="left:1461.5px;top:581px;width:106px;height:109px;border:2px solid #e2e2e2;background:linear-gradient(#e8e8e8 50%,#e6e6e6 50%)"></div>
<div class="t" style="left:1464.5px;top:694px;width:100px;text-align:center;font-size:13px;color:#eee">90</div>
<div class="a" style="left:1584.0px;top:581px;width:106px;height:109px;border:2px solid #e2e2e2;background:linear-gradient(#fffffd 50%,#ffffff 50%)"></div>
<div class="t" style="left:1587.0px;top:694px;width:100px;text-align:center;font-size:13px;color:#eee">100</div>
<div class="t" style="left:91px;top:745px;font-size:31px;color:#f2f2f2;letter-spacing:0.55px">Current Reading</div>
<div class="t" style="left:92px;top:794.0px;font-size:27px;color:#f2f2f2;transform:scaleX(0.98);transform-origin:0 0">x: 0,314</div>
<div class="t" style="left:92px;top:837.3px;font-size:27px;color:#f2f2f2;transform:scaleX(0.98);transform-origin:0 0">y: 0,3303</div>
<div class="t" style="left:92px;top:880.6px;font-size:27px;color:#f2f2f2;transform:scaleX(0.98);transform-origin:0 0">fL: 131,49</div>
<div class="t" style="left:92px;top:923.9px;font-size:27px;color:#f2f2f2;transform:scaleX(1.024);transform-origin:0 0">cd/m&sup2;: 450,52</div>
<div class="a" style="left:424px;top:737px;width:312px;height:230px;background:#e6e6e6"></div>
<div class="a" style="left:431px;top:744px;width:298px;height:217px;background:#2f2f2f"></div>
<svg class="a" style="left:472px;top:748px" width="254" height="183"><defs>
<linearGradient id="cg0"><stop offset="0.000" stop-color="rgb(128,245,194)"/><stop offset="0.333" stop-color="rgb(186,248,202)"/><stop offset="0.667" stop-color="rgb(250,251,209)"/><stop offset="1.000" stop-color="rgb(255,214,168)"/></linearGradient>
<linearGradient id="cg1"><stop offset="0.000" stop-color="rgb(132,245,199)"/><stop offset="0.333" stop-color="rgb(190,248,206)"/><stop offset="0.667" stop-color="rgb(250,250,212)"/><stop offset="1.000" stop-color="rgb(255,211,170)"/></linearGradient>
<linearGradient id="cg2"><stop offset="0.000" stop-color="rgb(135,246,203)"/><stop offset="0.333" stop-color="rgb(194,248,211)"/><stop offset="0.667" stop-color="rgb(251,249,215)"/><stop offset="1.000" stop-color="rgb(255,208,172)"/></linearGradient>
<linearGradient id="cg3"><stop offset="0.000" stop-color="rgb(138,247,208)"/><stop offset="0.333" stop-color="rgb(198,249,216)"/><stop offset="0.667" stop-color="rgb(251,249,218)"/><stop offset="1.000" stop-color="rgb(255,205,173)"/></linearGradient>
<linearGradient id="cg4"><stop offset="0.000" stop-color="rgb(142,247,213)"/><stop offset="0.333" stop-color="rgb(202,249,220)"/><stop offset="0.667" stop-color="rgb(251,248,221)"/><stop offset="1.000" stop-color="rgb(255,202,175)"/></linearGradient>
<linearGradient id="cg5"><stop offset="0.000" stop-color="rgb(145,248,217)"/><stop offset="0.333" stop-color="rgb(206,249,225)"/><stop offset="0.667" stop-color="rgb(252,247,224)"/><stop offset="1.000" stop-color="rgb(255,199,177)"/></linearGradient>
<linearGradient id="cg6"><stop offset="0.000" stop-color="rgb(149,248,222)"/><stop offset="0.333" stop-color="rgb(210,250,229)"/><stop offset="0.667" stop-color="rgb(252,246,227)"/><stop offset="1.000" stop-color="rgb(255,196,178)"/></linearGradient>
<linearGradient id="cg7"><stop offset="0.000" stop-color="rgb(152,249,227)"/><stop offset="0.333" stop-color="rgb(214,250,234)"/><stop offset="0.667" stop-color="rgb(253,245,230)"/><stop offset="1.000" stop-color="rgb(255,193,180)"/></linearGradient>
<linearGradient id="cg8"><stop offset="0.000" stop-color="rgb(156,249,231)"/><stop offset="0.333" stop-color="rgb(218,250,238)"/><stop offset="0.667" stop-color="rgb(253,244,233)"/><stop offset="1.000" stop-color="rgb(255,190,182)"/></linearGradient>
<linearGradient id="cg9"><stop offset="0.000" stop-color="rgb(159,250,236)"/><stop offset="0.333" stop-color="rgb(222,251,243)"/><stop offset="0.667" stop-color="rgb(253,244,236)"/><stop offset="1.000" stop-color="rgb(255,187,183)"/></linearGradient>
<linearGradient id="cg10"><stop offset="0.000" stop-color="rgb(162,251,241)"/><stop offset="0.333" stop-color="rgb(226,251,248)"/><stop offset="0.667" stop-color="rgb(254,243,239)"/><stop offset="1.000" stop-color="rgb(255,184,185)"/></linearGradient>
<linearGradient id="cg11"><stop offset="0.000" stop-color="rgb(166,251,245)"/><stop offset="0.333" stop-color="rgb(230,251,252)"/><stop offset="0.667" stop-color="rgb(254,242,242)"/><stop offset="1.000" stop-color="rgb(255,181,187)"/></linearGradient>
<linearGradient id="cg12"><stop offset="0.000" stop-color="rgb(168,249,248)"/><stop offset="0.333" stop-color="rgb(231,249,255)"/><stop offset="0.667" stop-color="rgb(255,239,243)"/><stop offset="1.000" stop-color="rgb(255,178,187)"/></linearGradient>
<linearGradient id="cg13"><stop offset="0.000" stop-color="rgb(168,245,248)"/><stop offset="0.333" stop-color="rgb(230,245,255)"/><stop offset="0.667" stop-color="rgb(255,235,243)"/><stop offset="1.000" stop-color="rgb(255,175,187)"/></linearGradient>
<linearGradient id="cg14"><stop offset="0.000" stop-color="rgb(168,240,249)"/><stop offset="0.333" stop-color="rgb(229,241,255)"/><stop offset="0.667" stop-color="rgb(255,231,243)"/><stop offset="1.000" stop-color="rgb(255,172,187)"/></linearGradient>
<linearGradient id="cg15"><stop offset="0.000" stop-color="rgb(168,235,250)"/><stop offset="0.333" stop-color="rgb(228,236,255)"/><stop offset="0.667" stop-color="rgb(255,227,242)"/><stop offset="1.000" stop-color="rgb(255,169,186)"/></linearGradient>
<linearGradient id="cg16"><stop offset="0.000" stop-color="rgb(168,231,250)"/><stop offset="0.333" stop-color="rgb(227,232,255)"/><stop offset="0.667" stop-color="rgb(255,223,242)"/><stop offset="1.000" stop-color="rgb(255,166,186)"/></linearGradient>
<linearGradient id="cg17"><stop offset="0.000" stop-color="rgb(168,226,251)"/><stop offset="0.333" stop-color="rgb(226,228,255)"/><stop offset="0.667" stop-color="rgb(255,219,242)"/><stop offset="1.000" stop-color="rgb(255,163,186)"/></linearGradient>
<linearGradient id="cg18"><stop offset="0.000" stop-color="rgb(168,221,251)"/><stop offset="0.333" stop-color="rgb(225,223,255)"/><stop offset="0.667" stop-color="rgb(255,214,241)"/><stop offset="1.000" stop-color="rgb(255,160,185)"/></linearGradient>
<linearGradient id="cg19"><stop offset="0.000" stop-color="rgb(168,217,252)"/><stop offset="0.333" stop-color="rgb(224,219,255)"/><stop offset="0.667" stop-color="rgb(255,210,241)"/><stop offset="1.000" stop-color="rgb(255,157,185)"/></linearGradient>
<linearGradient id="cg20"><stop offset="0.000" stop-color="rgb(168,212,252)"/><stop offset="0.333" stop-color="rgb(223,215,255)"/><stop offset="0.667" stop-color="rgb(255,206,241)"/><stop offset="1.000" stop-color="rgb(255,154,185)"/></linearGradient>
<linearGradient id="cg21"><stop offset="0.000" stop-color="rgb(168,207,253)"/><stop offset="0.333" stop-color="rgb(222,210,255)"/><stop offset="0.667" stop-color="rgb(255,202,240)"/><stop offset="1.000" stop-color="rgb(255,151,184)"/></linearGradient>
<linearGradient id="cg22"><stop offset="0.000" stop-color="rgb(168,203,254)"/><stop offset="0.333" stop-color="rgb(221,206,255)"/><stop offset="0.667" stop-color="rgb(255,198,240)"/><stop offset="1.000" stop-color="rgb(255,148,184)"/></linearGradient>
<linearGradient id="cg23"><stop offset="0.000" stop-color="rgb(168,198,254)"/><stop offset="0.333" stop-color="rgb(220,202,255)"/><stop offset="0.667" stop-color="rgb(255,194,240)"/><stop offset="1.000" stop-color="rgb(255,145,184)"/></linearGradient>
</defs>
<rect x="0" y="0" width="254" height="8" fill="url(#cg0)" shape-rendering="crispEdges"/>
<rect x="0" y="7" width="254" height="9" fill="url(#cg1)" shape-rendering="crispEdges"/>
<rect x="0" y="15" width="254" height="8" fill="url(#cg2)" shape-rendering="crispEdges"/>
<rect x="0" y="22" width="254" height="9" fill="url(#cg3)" shape-rendering="crispEdges"/>
<rect x="0" y="30" width="254" height="9" fill="url(#cg4)" shape-rendering="crispEdges"/>
<rect x="0" y="38" width="254" height="8" fill="url(#cg5)" shape-rendering="crispEdges"/>
<rect x="0" y="45" width="254" height="9" fill="url(#cg6)" shape-rendering="crispEdges"/>
<rect x="0" y="53" width="254" height="9" fill="url(#cg7)" shape-rendering="crispEdges"/>
<rect x="0" y="61" width="254" height="8" fill="url(#cg8)" shape-rendering="crispEdges"/>
<rect x="0" y="68" width="254" height="9" fill="url(#cg9)" shape-rendering="crispEdges"/>
<rect x="0" y="76" width="254" height="8" fill="url(#cg10)" shape-rendering="crispEdges"/>
<rect x="0" y="83" width="254" height="9" fill="url(#cg11)" shape-rendering="crispEdges"/>
<rect x="0" y="91" width="254" height="9" fill="url(#cg12)" shape-rendering="crispEdges"/>
<rect x="0" y="99" width="254" height="8" fill="url(#cg13)" shape-rendering="crispEdges"/>
<rect x="0" y="106" width="254" height="9" fill="url(#cg14)" shape-rendering="crispEdges"/>
<rect x="0" y="114" width="254" height="9" fill="url(#cg15)" shape-rendering="crispEdges"/>
<rect x="0" y="122" width="254" height="8" fill="url(#cg16)" shape-rendering="crispEdges"/>
<rect x="0" y="129" width="254" height="9" fill="url(#cg17)" shape-rendering="crispEdges"/>
<rect x="0" y="137" width="254" height="8" fill="url(#cg18)" shape-rendering="crispEdges"/>
<rect x="0" y="144" width="254" height="9" fill="url(#cg19)" shape-rendering="crispEdges"/>
<rect x="0" y="152" width="254" height="9" fill="url(#cg20)" shape-rendering="crispEdges"/>
<rect x="0" y="160" width="254" height="8" fill="url(#cg21)" shape-rendering="crispEdges"/>
<rect x="0" y="167" width="254" height="9" fill="url(#cg22)" shape-rendering="crispEdges"/>
<rect x="0" y="175" width="254" height="9" fill="url(#cg23)" shape-rendering="crispEdges"/>
<rect x="0.5" y="0.5" width="253" height="182" fill="none" stroke="#888" stroke-width="1"/>
<line x1="32.5" y1="183" x2="253" y2="30.5" stroke="#000" stroke-width="2.7"/>
<circle cx="108.5" cy="100.20000000000005" r="5" fill="#111"/>
<rect x="118.5" y="83.5" width="14.5" height="14.5" fill="rgba(200,200,200,0.35)" stroke="#111" stroke-width="1.6"/>
<circle cx="133.60000000000002" cy="79.5" r="4.5" fill="#555" stroke="#222" stroke-width="1"/>
<circle cx="127" cy="86.5" r="4.5" fill="#ccc" stroke="#333" stroke-width="1"/>
<circle cx="131.60000000000002" cy="85.29999999999995" r="4.5" fill="#fff" stroke="#333" stroke-width="1"/>
<circle cx="124.29999999999995" cy="90" r="4.5" fill="#ddd" stroke="#333" stroke-width="1"/>
</svg>
<svg class="a" style="left:0;top:0" width="1920" height="1039">
<line x1="466" y1="762.3" x2="472" y2="762.3" stroke="#ddd" stroke-width="1.2"/>
<line x1="466" y1="798.8" x2="472" y2="798.8" stroke="#ddd" stroke-width="1.2"/>
<line x1="466" y1="835.3" x2="472" y2="835.3" stroke="#ddd" stroke-width="1.2"/>
<line x1="466" y1="871.8" x2="472" y2="871.8" stroke="#ddd" stroke-width="1.2"/>
<line x1="466" y1="908.3" x2="472" y2="908.3" stroke="#ddd" stroke-width="1.2"/>
<line x1="482.0" y1="931" x2="482.0" y2="936" stroke="#ddd" stroke-width="1.2"/>
<line x1="532.7" y1="931" x2="532.7" y2="936" stroke="#ddd" stroke-width="1.2"/>
<line x1="583.4" y1="931" x2="583.4" y2="936" stroke="#ddd" stroke-width="1.2"/>
<line x1="634.1" y1="931" x2="634.1" y2="936" stroke="#ddd" stroke-width="1.2"/>
<line x1="684.8" y1="931" x2="684.8" y2="936" stroke="#ddd" stroke-width="1.2"/>
</svg>
<div class="t" style="left:400px;top:754.3px;width:66px;text-align:right;font-size:15px;color:#ddd">0,35</div>
<div class="t" style="left:400px;top:790.8px;width:66px;text-align:right;font-size:15px;color:#ddd">0,34</div>
<div class="t" style="left:400px;top:827.3px;width:66px;text-align:right;font-size:15px;color:#ddd">0,33</div>
<div class="t" style="left:400px;top:863.8px;width:66px;text-align:right;font-size:15px;color:#ddd">0,32</div>
<div class="t" style="left:400px;top:900.3px;width:66px;text-align:right;font-size:15px;color:#ddd">0,31</div>
<div class="t" style="left:457.0px;top:940px;width:50px;text-align:center;font-size:15px;color:#ddd">0,29</div>
<div class="t" style="left:507.7px;top:940px;width:50px;text-align:center;font-size:15px;color:#ddd">0,3</div>
<div class="t" style="left:558.4px;top:940px;width:50px;text-align:center;font-size:15px;color:#ddd">0,31</div>
<div class="t" style="left:609.1px;top:940px;width:50px;text-align:center;font-size:15px;color:#ddd">0,32</div>
<div class="t" style="left:659.8px;top:940px;width:50px;text-align:center;font-size:15px;color:#ddd">0,33</div>
<div class="a" style="left:744px;top:723.5px;width:930px;height:222.5px;background:#151515"></div>
<div class="a" style="left:746px;top:725.5px;width:926px;height:14px;background:#2e2e2e"></div>
<div class="a" style="left:746px;top:739.5px;width:926px;height:14px;background:#151515"></div>
<div class="t" style="left:915.5px;top:731.5px;width:60px;text-align:center;font-size:17px;color:#f0f0f0">0</div>
<div class="t" style="left:989.0px;top:731.5px;width:60px;text-align:center;font-size:17px;color:#f0f0f0">10</div>
<div class="t" style="left:1057.8px;top:731.5px;width:60px;text-align:center;font-size:17px;color:#f0f0f0">20</div>
<div class="t" style="left:1126.5px;top:731.5px;width:60px;text-align:center;font-size:17px;color:#f0f0f0">30</div>
<div class="t" style="left:1195.2px;top:731.5px;width:60px;text-align:center;font-size:17px;color:#f0f0f0">40</div>
<div class="t" style="left:1264.0px;top:731.5px;width:60px;text-align:center;font-size:17px;color:#f0f0f0">50</div>
<div class="t" style="left:1332.8px;top:731.5px;width:60px;text-align:center;font-size:17px;color:#f0f0f0">60</div>
<div class="t" style="left:1401.5px;top:731.5px;width:60px;text-align:center;font-size:17px;color:#f0f0f0">70</div>
<div class="t" style="left:1470.2px;top:731.5px;width:60px;text-align:center;font-size:17px;color:#f0f0f0">80</div>
<div class="t" style="left:1539.0px;top:731.5px;width:60px;text-align:center;font-size:17px;color:#f0f0f0">90</div>
<div class="t" style="left:1607.8px;top:731.5px;width:60px;text-align:center;font-size:17px;color:#f0f0f0">100</div>
<div class="a" style="left:746px;top:753.5px;width:926px;height:27.7px;background:#3c3c3c"></div>
<div class="t" style="left:758px;top:760.5px;font-size:17px;font-weight:bold;-webkit-text-stroke:0;color:#f4f4f4">x: CIE31</div>
<div class="t" style="left:911.0px;top:760.5px;font-size:17px;color:#ececec">0,27</div>
<div class="t" style="left:989.2px;top:760.5px;font-size:17px;color:#ececec">0,31</div>
<div class="t" style="left:1058.0px;top:760.5px;font-size:17px;color:#ececec">0,31</div>
<div class="t" style="left:1126.8px;top:760.5px;font-size:17px;color:#ececec">0,31</div>
<div class="t" style="left:1195.5px;top:760.5px;font-size:17px;color:#ececec">0,31</div>
<div class="t" style="left:1264.2px;top:760.5px;font-size:17px;color:#ececec">0,31</div>
<div class="t" style="left:1333.0px;top:760.5px;font-size:17px;color:#ececec">0,31</div>
<div class="t" style="left:1401.8px;top:760.5px;font-size:17px;color:#ececec">0,31</div>
<div class="t" style="left:1470.5px;top:760.5px;font-size:17px;color:#ececec">0,31</div>
<div class="t" style="left:1539.2px;top:760.5px;font-size:17px;color:#ececec">0,31</div>
<div class="t" style="left:1608.0px;top:760.5px;font-size:17px;color:#ececec">0,31</div>
<div class="a" style="left:746px;top:780.9px;width:926px;height:27.7px;background:#858585"></div>
<div class="t" style="left:758px;top:787.9px;font-size:17px;font-weight:bold;-webkit-text-stroke:0;color:#f4f4f4">y: CIE31</div>
<div class="t" style="left:911.0px;top:787.9px;font-size:17px;color:#ececec">0,27</div>
<div class="t" style="left:989.2px;top:787.9px;font-size:17px;color:#ececec">0,33</div>
<div class="t" style="left:1058.0px;top:787.9px;font-size:17px;color:#ececec">0,33</div>
<div class="t" style="left:1126.8px;top:787.9px;font-size:17px;color:#ececec">0,33</div>
<div class="t" style="left:1195.5px;top:787.9px;font-size:17px;color:#ececec">0,33</div>
<div class="t" style="left:1264.2px;top:787.9px;font-size:17px;color:#ececec">0,33</div>
<div class="t" style="left:1333.0px;top:787.9px;font-size:17px;color:#ececec">0,33</div>
<div class="t" style="left:1401.8px;top:787.9px;font-size:17px;color:#ececec">0,33</div>
<div class="t" style="left:1470.5px;top:787.9px;font-size:17px;color:#ececec">0,33</div>
<div class="t" style="left:1539.2px;top:787.9px;font-size:17px;color:#ececec">0,33</div>
<div class="t" style="left:1608.0px;top:787.9px;font-size:17px;color:#ececec">0,33</div>
<div class="a" style="left:746px;top:808.3px;width:926px;height:27.7px;background:#3c3c3c"></div>
<div class="t" style="left:758px;top:815.3px;font-size:17px;font-weight:bold;-webkit-text-stroke:0;color:#f4f4f4">Y</div>
<div class="t" style="left:911.0px;top:815.3px;font-size:17px;color:#ececec">0,27</div>
<div class="t" style="left:989.2px;top:815.3px;font-size:17px;color:#ececec">3,09</div>
<div class="t" style="left:1058.0px;top:815.3px;font-size:17px;color:#ececec">13,34</div>
<div class="t" style="left:1126.8px;top:815.3px;font-size:17px;color:#ececec">31,27</div>
<div class="t" style="left:1195.5px;top:815.3px;font-size:17px;color:#ececec">59,64</div>
<div class="t" style="left:1264.2px;top:815.3px;font-size:17px;color:#ececec">97,13</div>
<div class="t" style="left:1333.0px;top:815.3px;font-size:17px;color:#ececec">145,42</div>
<div class="t" style="left:1401.8px;top:815.3px;font-size:17px;color:#ececec">202,91</div>
<div class="t" style="left:1470.5px;top:815.3px;font-size:17px;color:#ececec">275,41</div>
<div class="t" style="left:1539.2px;top:815.3px;font-size:17px;color:#ececec">356,27</div>
<div class="t" style="left:1608.0px;top:815.3px;font-size:17px;color:#ececec">450,52</div>
<div class="a" style="left:746px;top:835.7px;width:926px;height:27.7px;background:#858585"></div>
<div class="t" style="left:758px;top:842.7px;font-size:17px;font-weight:bold;-webkit-text-stroke:0;color:#f4f4f4">Target Y</div>
<div class="t" style="left:911.0px;top:842.7px;font-size:17px;color:#ececec">0,00</div>
<div class="t" style="left:989.2px;top:842.7px;font-size:17px;color:#ececec">4,65</div>
<div class="t" style="left:1058.0px;top:842.7px;font-size:17px;color:#ececec">14,91</div>
<div class="t" style="left:1126.8px;top:842.7px;font-size:17px;color:#ececec">32,56</div>
<div class="t" style="left:1195.5px;top:842.7px;font-size:17px;color:#ececec">59,86</div>
<div class="t" style="left:1264.2px;top:842.7px;font-size:17px;color:#ececec">97,25</div>
<div class="t" style="left:1333.0px;top:842.7px;font-size:17px;color:#ececec">143,51</div>
<div class="t" style="left:1401.8px;top:842.7px;font-size:17px;color:#ececec">200,57</div>
<div class="t" style="left:1470.5px;top:842.7px;font-size:17px;color:#ececec">272,04</div>
<div class="t" style="left:1539.2px;top:842.7px;font-size:17px;color:#ececec">356,49</div>
<div class="t" style="left:1608.0px;top:842.7px;font-size:17px;color:#ececec">450,52</div>
<div class="a" style="left:746px;top:863.1px;width:926px;height:27.7px;background:#3c3c3c"></div>
<div class="t" style="left:758px;top:870.1px;font-size:17px;font-weight:bold;-webkit-text-stroke:0;color:#f4f4f4">Gamma Log/Log</div>
<div class="t" style="left:911.0px;top:870.1px;font-size:17px;color:#ececec">1,28</div>
<div class="t" style="left:989.2px;top:870.1px;font-size:17px;color:#ececec">2,18</div>
<div class="t" style="left:1058.0px;top:870.1px;font-size:17px;color:#ececec">2,19</div>
<div class="t" style="left:1126.8px;top:870.1px;font-size:17px;color:#ececec">2,20</div>
<div class="t" style="left:1195.5px;top:870.1px;font-size:17px;color:#ececec">2,21</div>
<div class="t" style="left:1264.2px;top:870.1px;font-size:17px;color:#ececec">2,23</div>
<div class="t" style="left:1333.0px;top:870.1px;font-size:17px;color:#ececec">2,21</div>
<div class="t" style="left:1401.8px;top:870.1px;font-size:17px;color:#ececec">2,22</div>
<div class="t" style="left:1470.5px;top:870.1px;font-size:17px;color:#ececec">2,21</div>
<div class="t" style="left:1539.2px;top:870.1px;font-size:17px;color:#ececec">2,27</div>
<div class="t" style="left:1608.0px;top:870.1px;font-size:17px;color:#ececec">2,27</div>
<div class="a" style="left:746px;top:890.5px;width:926px;height:27.7px;background:#858585"></div>
<div class="t" style="left:758px;top:897.5px;font-size:17px;font-weight:bold;-webkit-text-stroke:0;color:#f4f4f4">CCT</div>
<div class="t" style="left:911.0px;top:897.5px;font-size:17px;color:#ececec">13159,00</div>
<div class="t" style="left:989.2px;top:897.5px;font-size:17px;color:#ececec">6710,00</div>
<div class="t" style="left:1058.0px;top:897.5px;font-size:17px;color:#ececec">6526,00</div>
<div class="t" style="left:1126.8px;top:897.5px;font-size:17px;color:#ececec">6402,00</div>
<div class="t" style="left:1195.5px;top:897.5px;font-size:17px;color:#ececec">6469,00</div>
<div class="t" style="left:1264.2px;top:897.5px;font-size:17px;color:#ececec">6486,00</div>
<div class="t" style="left:1333.0px;top:897.5px;font-size:17px;color:#ececec">6462,00</div>
<div class="t" style="left:1401.8px;top:897.5px;font-size:17px;color:#ececec">6497,00</div>
<div class="t" style="left:1470.5px;top:897.5px;font-size:17px;color:#ececec">6481,00</div>
<div class="t" style="left:1539.2px;top:897.5px;font-size:17px;color:#ececec">6511,00</div>
<div class="t" style="left:1608.0px;top:897.5px;font-size:17px;color:#ececec">6427,00</div>
<div class="a" style="left:746px;top:917.9px;width:926px;height:27.7px;background:#3c3c3c"></div>
<div class="t" style="left:758px;top:924.9px;font-size:17px;font-weight:bold;-webkit-text-stroke:0;color:#f4f4f4">&Delta;E 2000</div>
<div class="t" style="left:911.0px;top:924.9px;font-size:17px;color:#ececec">0,64</div>
<div class="t" style="left:989.2px;top:924.9px;font-size:17px;color:#ececec">1,90</div>
<div class="t" style="left:1058.0px;top:924.9px;font-size:17px;color:#ececec">0,97</div>
<div class="t" style="left:1126.8px;top:924.9px;font-size:17px;color:#ececec">0,93</div>
<div class="t" style="left:1195.5px;top:924.9px;font-size:17px;color:#ececec">0,34</div>
<div class="t" style="left:1264.2px;top:924.9px;font-size:17px;color:#ececec">0,11</div>
<div class="t" style="left:1333.0px;top:924.9px;font-size:17px;color:#ececec">0,41</div>
<div class="t" style="left:1401.8px;top:924.9px;font-size:17px;color:#ececec">0,30</div>
<div class="t" style="left:1470.5px;top:924.9px;font-size:17px;color:#ececec">0,84</div>
<div class="t" style="left:1539.2px;top:924.9px;font-size:17px;color:#ececec">0,31</div>
<div class="t" style="left:1608.0px;top:924.9px;font-size:17px;color:#ececec">0,72</div>
<div class="a" style="left:0;top:967px;width:1920px;height:72px;background:#2c2c2c"></div>
<div class="a" style="left:1.2px;top:969px;width:140px;height:69px;border-radius:4px;background:linear-gradient(#a6a6a6,#7c7c7c 60%,#5e5e5e)"></div>
<div class="a" style="left:7.2px;top:975px;width:128px;height:40px;border-radius:4px;background:#000000;box-shadow:inset 0 1px 2px rgba(0,0,0,0.4)"></div>
<div class="t" style="left:1.2px;top:1023.5px;width:140px;text-align:center;font-size:11.5px;font-weight:bold;-webkit-text-stroke:0;color:#2a2a2a">0</div>
<div class="a" style="left:143.1px;top:969px;width:140px;height:69px;border-radius:4px;background:linear-gradient(#a6a6a6,#7c7c7c 60%,#5e5e5e)"></div>
<div class="a" style="left:149.1px;top:975px;width:128px;height:40px;border-radius:4px;background:#1c1c1c;box-shadow:inset 0 1px 2px rgba(0,0,0,0.4)"></div>
<div class="t" style="left:143.1px;top:1023.5px;width:140px;text-align:center;font-size:11.5px;font-weight:bold;-webkit-text-stroke:0;color:#2a2a2a">10</div>
<div class="a" style="left:284.9px;top:969px;width:140px;height:69px;border-radius:4px;background:linear-gradient(#a6a6a6,#7c7c7c 60%,#5e5e5e)"></div>
<div class="a" style="left:290.9px;top:975px;width:128px;height:40px;border-radius:4px;background:#333333;box-shadow:inset 0 1px 2px rgba(0,0,0,0.4)"></div>
<div class="t" style="left:284.9px;top:1023.5px;width:140px;text-align:center;font-size:11.5px;font-weight:bold;-webkit-text-stroke:0;color:#2a2a2a">20</div>
<div class="a" style="left:426.7px;top:969px;width:140px;height:69px;border-radius:4px;background:linear-gradient(#a6a6a6,#7c7c7c 60%,#5e5e5e)"></div>
<div class="a" style="left:432.7px;top:975px;width:128px;height:40px;border-radius:4px;background:#4b4b4b;box-shadow:inset 0 1px 2px rgba(0,0,0,0.4)"></div>
<div class="t" style="left:426.7px;top:1023.5px;width:140px;text-align:center;font-size:11.5px;font-weight:bold;-webkit-text-stroke:0;color:#2a2a2a">30</div>
<div class="a" style="left:568.5px;top:969px;width:140px;height:69px;border-radius:4px;background:linear-gradient(#a6a6a6,#7c7c7c 60%,#5e5e5e)"></div>
<div class="a" style="left:574.5px;top:975px;width:128px;height:40px;border-radius:4px;background:#666666;box-shadow:inset 0 1px 2px rgba(0,0,0,0.4)"></div>
<div class="t" style="left:568.5px;top:1023.5px;width:140px;text-align:center;font-size:11.5px;font-weight:bold;-webkit-text-stroke:0;color:#2a2a2a">40</div>
<div class="a" style="left:710.2px;top:969px;width:140px;height:69px;border-radius:4px;background:linear-gradient(#a6a6a6,#7c7c7c 60%,#5e5e5e)"></div>
<div class="a" style="left:716.2px;top:975px;width:128px;height:40px;border-radius:4px;background:#808080;box-shadow:inset 0 1px 2px rgba(0,0,0,0.4)"></div>
<div class="t" style="left:710.2px;top:1023.5px;width:140px;text-align:center;font-size:11.5px;font-weight:bold;-webkit-text-stroke:0;color:#2a2a2a">50</div>
<div class="a" style="left:852.1px;top:969px;width:140px;height:69px;border-radius:4px;background:linear-gradient(#a6a6a6,#7c7c7c 60%,#5e5e5e)"></div>
<div class="a" style="left:858.1px;top:975px;width:128px;height:40px;border-radius:4px;background:#999999;box-shadow:inset 0 1px 2px rgba(0,0,0,0.4)"></div>
<div class="t" style="left:852.1px;top:1023.5px;width:140px;text-align:center;font-size:11.5px;font-weight:bold;-webkit-text-stroke:0;color:#2a2a2a">60</div>
<div class="a" style="left:993.9px;top:969px;width:140px;height:69px;border-radius:4px;background:linear-gradient(#a6a6a6,#7c7c7c 60%,#5e5e5e)"></div>
<div class="a" style="left:999.9px;top:975px;width:128px;height:40px;border-radius:4px;background:#b3b3b3;box-shadow:inset 0 1px 2px rgba(0,0,0,0.4)"></div>
<div class="t" style="left:993.9px;top:1023.5px;width:140px;text-align:center;font-size:11.5px;font-weight:bold;-webkit-text-stroke:0;color:#2a2a2a">70</div>
<div class="a" style="left:1135.7px;top:969px;width:140px;height:69px;border-radius:4px;background:linear-gradient(#a6a6a6,#7c7c7c 60%,#5e5e5e)"></div>
<div class="a" style="left:1141.7px;top:975px;width:128px;height:40px;border-radius:4px;background:#cccccc;box-shadow:inset 0 1px 2px rgba(0,0,0,0.4)"></div>
<div class="t" style="left:1135.7px;top:1023.5px;width:140px;text-align:center;font-size:11.5px;font-weight:bold;-webkit-text-stroke:0;color:#2a2a2a">80</div>
<div class="a" style="left:1277.5px;top:969px;width:140px;height:69px;border-radius:4px;background:linear-gradient(#a6a6a6,#7c7c7c 60%,#5e5e5e)"></div>
<div class="a" style="left:1283.5px;top:975px;width:128px;height:40px;border-radius:4px;background:#e6e6e6;box-shadow:inset 0 1px 2px rgba(0,0,0,0.4)"></div>
<div class="t" style="left:1277.5px;top:1023.5px;width:140px;text-align:center;font-size:11.5px;font-weight:bold;-webkit-text-stroke:0;color:#2a2a2a">90</div>
<div class="a" style="left:1419.2px;top:969px;width:140px;height:69px;border-radius:4px;background:linear-gradient(#181818,#2a2a2a 12%,#333 45%,#313131)"></div>
<div class="a" style="left:1426.2px;top:975px;width:128px;height:40px;border-radius:4px;background:#fff"></div>
<div class="t" style="left:1419.2px;top:1023.5px;width:140px;text-align:center;font-size:12px;font-weight:bold;-webkit-text-stroke:0;color:#fff">100</div>
<div class="a" style="left:1563px;top:969px;width:54px;height:20px;border-radius:4px 4px 0 0;background:linear-gradient(#a8a8a8,#7a7a7a)"></div>
<div class="a" style="left:1578px;top:970px;width:22px;height:18px;border-radius:50%;background:radial-gradient(circle at 50% 35%,#6c6c6c,#9a9a9a 80%)"></div>
<svg class="a" style="left:1583px;top:975px" width="12" height="6"><path d="M0 6 L6 0 L12 6 Z" fill="#2a2a2a"/></svg>
<div class="a" style="left:1563px;top:990px;width:54px;height:47px;border-radius:0 0 4px 4px;background:linear-gradient(#8c8c8c,#6a6a6a)"></div>
<div class="a" style="left:1573px;top:996px;width:34px;height:35px;border-radius:5px;background:#222"></div>
<div class="a" style="left:1576px;top:999px;width:28px;height:29px;border-radius:3px;background:linear-gradient(#a6a6a6 50%,#8f8f8f 50%)"></div>
<div class="a" style="left:1583px;top:1007px;width:15px;height:15px;background:linear-gradient(#282828 50%,#000 50%)"></div>
<div class="a" style="left:1619px;top:969px;width:51px;height:34px;background:linear-gradient(#ababab,#8a8a8a 60%,#707070)"></div>
<div class="a" style="left:1633.5px;top:975px;width:22px;height:23px;border-radius:50%;background:radial-gradient(circle at 50% 30%,#777,#a8a8a8 85%)"></div>
<div class="a" style="left:1671px;top:969px;width:50px;height:34px;background:linear-gradient(#ababab,#8a8a8a 60%,#707070)"></div>
<div class="a" style="left:1685.0px;top:975px;width:22px;height:23px;border-radius:50%;background:radial-gradient(circle at 50% 30%,#777,#a8a8a8 85%)"></div>
<div class="a" style="left:1722px;top:969px;width:50px;height:34px;background:linear-gradient(#ababab,#8a8a8a 60%,#707070)"></div>
<div class="a" style="left:1736.0px;top:975px;width:22px;height:23px;border-radius:50%;background:radial-gradient(circle at 50% 30%,#777,#a8a8a8 85%)"></div>
<div class="a" style="left:1773px;top:969px;width:50px;height:34px;background:linear-gradient(#ababab,#8a8a8a 60%,#707070)"></div>
<div class="a" style="left:1787.0px;top:975px;width:22px;height:23px;border-radius:50%;background:radial-gradient(circle at 50% 30%,#777,#a8a8a8 85%)"></div>
<div class="a" style="left:1824px;top:969px;width:49px;height:34px;background:linear-gradient(#ababab,#8a8a8a 60%,#707070)"></div>
<div class="a" style="left:1837.5px;top:975px;width:22px;height:23px;border-radius:50%;background:radial-gradient(circle at 50% 30%,#777,#a8a8a8 85%)"></div>
<div class="a" style="left:1670px;top:969px;width:1px;height:34px;background:#3a3a3a"></div>
<div class="a" style="left:1721px;top:969px;width:1px;height:34px;background:#3a3a3a"></div>
<div class="a" style="left:1772px;top:969px;width:1px;height:34px;background:#3a3a3a"></div>
<div class="a" style="left:1823px;top:969px;width:1px;height:34px;background:#3a3a3a"></div>
<div class="a" style="left:1640px;top:981px;width:10px;height:10px;background:#2a2a2a"></div>
<svg class="a" style="left:1692px;top:979px" width="11" height="13"><path d="M0 0 L11 6.5 L0 13 Z" fill="#2a2a2a"/></svg>
<div class="t" style="left:1738px;top:978px;font-size:14px;font-weight:bold;-webkit-text-stroke:0;color:#2a2a2a;letter-spacing:-1px">[&middot;&middot;]</div>
<svg class="a" style="left:1789px;top:980px" width="16" height="10"><path d="M8 5 C5 0,1 0,1 5 C1 10,5 10,8 5 C11 0,15 0,15 5 C15 10,11 10,8 5 Z" fill="none" stroke="#2a2a2a" stroke-width="2.2"/></svg>
<svg class="a" style="left:1840px;top:979px" width="18" height="14"><path d="M3 7 A6 6 0 0 1 14 4" fill="none" stroke="#2a2a2a" stroke-width="2.5"/><path d="M15 7 A6 6 0 0 1 4 10" fill="none" stroke="#2a2a2a" stroke-width="2.5"/><path d="M11 1 L16 1 L16 6 Z" fill="#2a2a2a"/><path d="M7 13 L2 13 L2 8 Z" fill="#2a2a2a"/></svg>
<div class="a" style="left:1874px;top:969px;width:46px;height:34px;background:#2e2e2e"></div>
<div class="a" style="left:1887px;top:974px;width:24px;height:24px;border-radius:50%;background:radial-gradient(circle at 50% 40%,#353535,#444)"></div>
<div class="a" style="left:1619px;top:1004px;width:153px;height:34px;border-radius:4px 0 0 0;background:linear-gradient(#b5b5b5,#8c8c8c 55%,#6e6e6e)"></div>
<div class="a" style="left:1773px;top:1004px;width:147px;height:34px;border-radius:0 4px 0 0;background:linear-gradient(#b5b5b5,#8c8c8c 55%,#6e6e6e)"></div>
<div class="a" style="left:1772px;top:1004px;width:1px;height:34px;background:#555"></div>
<div class="a" style="left:1642px;top:1010px;width:22px;height:22px;border-radius:50%;background:radial-gradient(circle at 50% 30%,#777,#a8a8a8 85%)"></div>
<div class="a" style="left:1883px;top:1010px;width:22px;height:22px;border-radius:50%;background:radial-gradient(circle at 50% 30%,#777,#a8a8a8 85%)"></div>
<svg class="a" style="left:1645px;top:1014px" width="16" height="14"><path d="M7 2 L2.5 7 L7 12 M12.5 2 L8 7 L12.5 12" fill="none" stroke="#3a3a3a" stroke-width="2"/></svg>
<svg class="a" style="left:1886px;top:1014px" width="16" height="14"><path d="M3.5 2 L8 7 L3.5 12 M9 2 L13.5 7 L9 12" fill="none" stroke="#3a3a3a" stroke-width="2"/></svg>
<div class="t" style="left:1684px;top:1009px;font-size:25px;font-weight:bold;-webkit-text-stroke:0;color:#353535;transform:scaleX(0.96);transform-origin:0 0">Back</div>
<div class="t" style="left:1804px;top:1009px;font-size:25px;font-weight:bold;-webkit-text-stroke:0;color:#353535;transform:scaleX(1.08);transform-origin:0 0">Next</div>
</body></html>
